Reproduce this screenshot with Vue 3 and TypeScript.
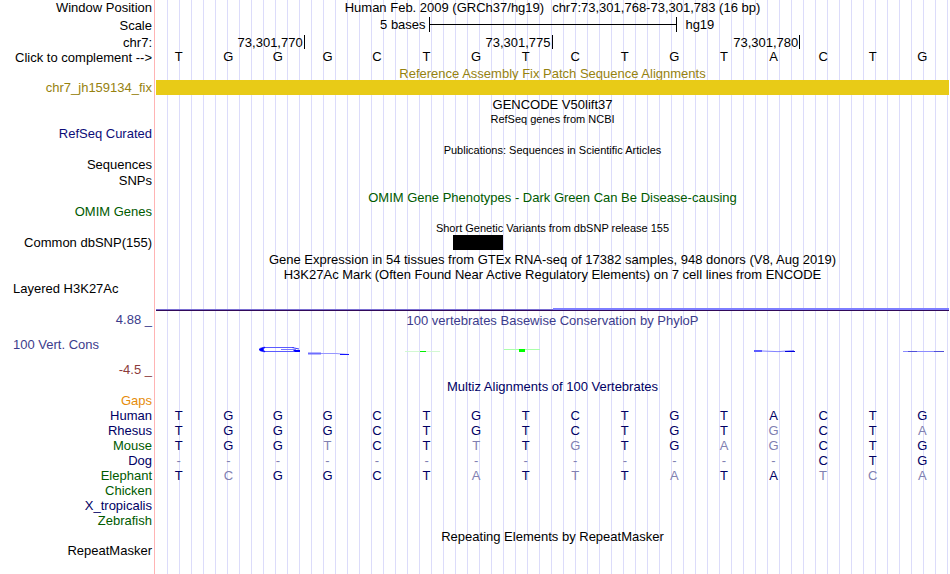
<script setup lang="ts">
import { computed, ref } from 'vue'

interface AlignmentRow {
  species: string
  tone: 'navy' | 'green'
  bases: string
}

const reference = 'TGGGCTGTCTGTACTG'
const complemented = ref(false)
const pairs: Record<string, string> = { A: 'T', T: 'A', C: 'G', G: 'C' }

const shownBases = computed(() =>
  reference.split('').map((base) => (complemented.value ? pairs[base] : base)),
)

const coordinates = ['73,301,770', '73,301,775', '73,301,780']

const alignments: AlignmentRow[] = [
  { species: 'Human', tone: 'navy', bases: 'TGGGCTGTCTGTACTG' },
  { species: 'Rhesus', tone: 'navy', bases: 'TGGGCTGTCTGTGCTA' },
  { species: 'Mouse', tone: 'green', bases: 'TGGTCTTTGTGAGCTG' },
  { species: 'Dog', tone: 'navy', bases: '-------------CTG' },
  { species: 'Elephant', tone: 'green', bases: 'TCGGCTATTTATATCA' },
  { species: 'Chicken', tone: 'green', bases: '' },
  { species: 'X_tropicalis', tone: 'navy', bases: '' },
  { species: 'Zebrafish', tone: 'green', bases: '' },
]

const baseAt = (row: AlignmentRow, index: number) => row.bases[index] ?? ''
const differs = (row: AlignmentRow, index: number) => row.bases[index] !== reference[index]
</script>

<template>
  <main class="browser">
    <div class="row h18">
      <span class="label">Window Position</span>
      <div class="track title">
        <span>Human Feb. 2009 (GRCh37/hg19)</span>
        <span class="position">chr7:73,301,768-73,301,783 (16 bp)</span>
      </div>
    </div>
    <div class="row h17">
      <span class="label">Scale</span>
      <div class="track scale raised">
        <span class="scale-size">5 bases</span>
        <span class="scale-bar"></span>
        <span class="scale-assembly">hg19</span>
      </div>
    </div>
    <div class="row">
      <span class="label">chr7:</span>
      <div class="track coordinates">
        <span v-for="c in coordinates" :key="c" class="coordinate">{{ c }}</span>
      </div>
    </div>
    <div class="row h16">
      <button class="label" type="button" @click="complemented = !complemented">Click to complement --&gt;</button>
      <div class="bases raised">
        <span v-for="(base, i) in shownBases" :key="i">{{ base }}</span>
      </div>
    </div>

    <div class="row h14 clipped"><div class="track title mustard">Reference Assembly Fix Patch Sequence Alignments</div></div>
    <div class="row h17">
      <span class="label mustard">chr7_jh159134_fix</span>
      <div class="track"><div class="patch"></div></div>
    </div>

    <div class="row"><div class="track title">GENCODE V50lift37</div></div>
    <div class="row h14"><div class="track title small">RefSeq genes from NCBI</div></div>
    <div class="row h17"><span class="label refseq">RefSeq Curated</span></div>

    <div class="row h14"><div class="track title small">Publications: Sequences in Scientific Articles</div></div>
    <div class="row h16"><span class="label">Sequences</span></div>
    <div class="row h17"><span class="label">SNPs</span></div>

    <div class="row h14"><div class="track title green">OMIM Gene Phenotypes - Dark Green Can Be Disease-causing</div></div>
    <div class="row h17"><span class="label green">OMIM Genes</span></div>

    <div class="row h14"><div class="track title small">Short Genetic Variants from dbSNP release 155</div></div>
    <div class="row h17">
      <span class="label">Common dbSNP(155)</span>
      <div class="track variants"><div class="variant"></div></div>
    </div>

    <div class="row"><div class="track title">Gene Expression in 54 tissues from GTEx RNA-seq of 17382 samples, 948 donors (V8, Aug 2019)</div></div>
    <div class="row h14"><div class="track title">H3K27Ac Mark (Often Found Near Active Regulatory Elements) on 7 cell lines from ENCODE</div></div>
    <div class="row h31">
      <span class="label start">Layered H3K27Ac</span>
      <div class="track">
        <svg class="signal" viewBox="0 0 793 31" preserveAspectRatio="none" shape-rendering="crispEdges" aria-hidden="true">
          <rect x="0" y="28" width="793" height="1" fill="#7a6ed2" />
          <rect x="397" y="27" width="396" height="2" fill="#7d7dff" />
          <rect x="0" y="29" width="793" height="1" fill="#320a5a" />
        </svg>
      </div>
    </div>

    <div class="row h67">
      <div class="axis">
        <span class="label slate">4.88 _</span>
        <span class="label start slate">100 Vert. Cons</span>
        <span class="label maroon">-4.5 _</span>
      </div>
      <div class="track conservation">
        <div class="title slate">100 vertebrates Basewise Conservation by PhyloP</div>
        <svg class="logo" viewBox="0 0 793 51" preserveAspectRatio="none" aria-hidden="true">
          <path d="M108 19.5 H138 M108 23.5 H140" stroke="#5a5aff" />
          <path d="M125 21.5 H140" stroke="#7878ff" />
          <path d="M109 19 Q103 20 103 21.5 Q103 23 109 24 Q106 21.5 109 19Z" fill="#0000ff" stroke="#0000ff" stroke-width="0.5" />
          <path d="M136 19.5 L143 21" stroke="#3c3cff" />
          <path d="M137 22 H144 V24 H139Z" fill="#0000ff" />
          <path d="M152 25.5 H165" stroke="#6e6eff" stroke-width="2" />
          <path d="M165 25.5 H180 L193 26.5" fill="none" stroke="#9696ff" />
          <path d="M184 26.5 H193" stroke="#1414ff" />
          <path d="M249 23.5 H284" stroke="#d2f8d2" />
          <path d="M264 23.5 H270" stroke="#00f000" />
          <path d="M348 21.5 H384" stroke="#aaffaa" />
          <path d="M363 21 H369 V24 H363Z" fill="#00ff00" />
          <path d="M598 23 H606" stroke="#5a5aff" stroke-width="2" />
          <path d="M606 23 Q622 24.5 638 22.5" fill="none" stroke="#8282ff" />
          <path d="M629 23.5 H639" stroke="#0000dc" />
          <path d="M747 23.5 H788" stroke="#8c8cff" />
          <path d="M752 23.5 H761 M778 23.5 H788" stroke="#5050d8" />
        </svg>
      </div>
    </div>

    <div class="row h14"><div class="track title navy">Multiz Alignments of 100 Vertebrates</div></div>
    <div class="row"><span class="label orange">Gaps</span></div>
    <table class="alignment" aria-label="Multiz Alignments of 100 Vertebrates">
      <tbody>
        <tr v-for="row in alignments" :key="row.species">
          <th scope="row" :class="row.tone">{{ row.species }}</th>
          <td v-for="i in 16" :key="i" :class="{ mismatch: differs(row, i - 1) }">{{ baseAt(row, i - 1) }}</td>
        </tr>
      </tbody>
    </table>

    <div class="row repeats"><div class="track title">Repeating Elements by RepeatMasker</div></div>
    <div class="row"><span class="label">RepeatMasker</span></div>
  </main>
</template>

<style>
body {
  margin: 0;
  background: #fff;
}
</style>

<style scoped>
.browser {
  box-sizing: border-box;
  min-height: 100vh;
  overflow: hidden;
  color: #000;
  font: 13px/15px "Liberation Sans", Arial, sans-serif;
  background:
    linear-gradient(to right, #fff 154px, #ffb4b4 154px 155px, #fff 155px 156px, transparent 156px),
    repeating-linear-gradient(to right, transparent 0 11px, #dcdcfa 11px 12px);
}

.row {
  display: grid;
  grid-template-columns: 152px minmax(0, 1fr);
  column-gap: 4px;
  height: 15px;
  padding-right: 1px;
  white-space: nowrap;
}

.h14 { height: 14px; }
.h16 { height: 16px; }
.h17 { height: 17px; }
.h18 { height: 18px; }
.h31 { height: 31px; }
.h67 { height: 67px; }
.clipped { overflow: hidden; }

.label {
  grid-column: 1;
  text-align: right;
}

button.label {
  align-self: start;
  padding: 0;
  border: 0;
  background: none;
  color: inherit;
  font: inherit;
  cursor: pointer;
}

.start {
  padding-left: 13px;
  text-align: left;
}

.track { grid-column: 2; }
.title { text-align: center; }
.raised { line-height: 13px; }
.small { font-size: 11px; }
.position { margin-left: 8px; }

.scale {
  display: grid;
  grid-template-columns: 11fr 10fr 11fr;
}

.scale-size {
  padding-right: 3px;
  text-align: right;
}

.scale-assembly { padding-left: 9px; }

.scale-bar {
  height: 15px;
  margin: -1px -1px 0 0;
  border: solid #000;
  border-width: 0 1px;
  background: linear-gradient(#000, #000) center / 100% 1px no-repeat;
}

.coordinates {
  display: grid;
  grid-template-columns: 3fr 5fr 5fr 3fr;
}

.coordinate {
  height: 14px;
  padding-right: 1px;
  border-right: 1px solid #000;
  text-align: right;
}

.bases {
  grid-column: 2;
  display: grid;
  grid-template-columns: repeat(16, minmax(0, 1fr));
  margin-left: -2px;
  padding-right: 2px;
  text-align: center;
}

.patch {
  height: 15px;
  background: #e8cb17;
}

.variants {
  display: grid;
  grid-template-columns: 6fr 1fr 9fr;
}

.variant {
  grid-column: 2;
  height: 15px;
  background: #000;
}

.signal,
.logo {
  display: block;
  width: 100%;
}

.signal { height: 31px; }
.logo { height: 51px; }
.conservation { padding-top: 1px; }

.axis {
  display: grid;
  grid-template-rows: 25px 25px 17px;
}

.alignment {
  width: 100%;
  padding-right: 3px;
  border-spacing: 0;
  table-layout: fixed;
}

.alignment th {
  width: 152px;
  height: 15px;
  padding: 0 2px 0 0;
  font-weight: normal;
  text-align: right;
}

.alignment td {
  padding: 0;
  color: #000064;
  text-align: center;
}

.alignment td.mismatch { color: #8080b1; }

.repeats { padding-top: 1px; height: 14px; }

.mustard { color: #96820f; }
.refseq { color: #0c0c78; }
.green { color: #005a00; }
.slate { color: #3c3c8c; }
.maroon { color: #8c3c3c; }
.navy { color: #000064; }
.orange { color: #e68c0a; }
</style>
